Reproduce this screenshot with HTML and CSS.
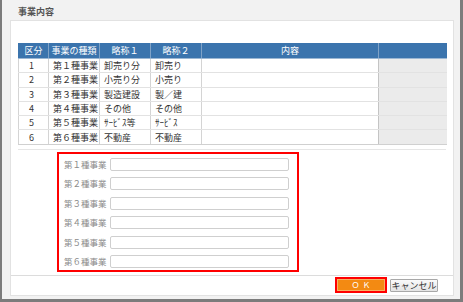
FILE: index.html
```html
<!DOCTYPE html>
<html lang="ja">
<head>
<meta charset="utf-8">
<link rel="stylesheet" href="styles.css">
</head>
<body>
<div class="window">
  <div class="title">事業内容</div>
  <div class="panel">
    <table class="grid">
      <colgroup>
        <col class="c1"><col class="c2"><col class="c3"><col class="c4"><col class="c5"><col class="c6">
      </colgroup>
      <thead>
        <tr><th>区分</th><th>事業の種類</th><th>略称１</th><th>略称２</th><th>内容</th><th></th></tr>
      </thead>
      <tbody>
        <tr><td class="num">1</td><td>第１種事業</td><td>卸売り分</td><td>卸売り</td><td></td><td class="gray"></td></tr>
        <tr><td class="num">2</td><td>第２種事業</td><td>小売り分</td><td>小売り</td><td></td><td class="gray"></td></tr>
        <tr><td class="num">3</td><td>第３種事業</td><td>製造建設</td><td>製／建</td><td></td><td class="gray"></td></tr>
        <tr><td class="num">4</td><td>第４種事業</td><td>その他</td><td>その他</td><td></td><td class="gray"></td></tr>
        <tr><td class="num">5</td><td>第５種事業</td><td>ｻｰﾋﾞｽ等</td><td>ｻｰﾋﾞｽ</td><td></td><td class="gray"></td></tr>
        <tr><td class="num">6</td><td>第６種事業</td><td>不動産</td><td>不動産</td><td></td><td class="gray"></td></tr>
      </tbody>
    </table>
    <div class="sep"></div>
    <div class="form">
      <label>第１種事業</label><div class="input"></div>
      <label>第２種事業</label><div class="input"></div>
      <label>第３種事業</label><div class="input"></div>
      <label>第４種事業</label><div class="input"></div>
      <label>第５種事業</label><div class="input"></div>
      <label>第６種事業</label><div class="input"></div>
    </div>
    <div class="footer">
      <button class="ok">ＯＫ</button>
      <button class="cancel">キャンセル</button>
    </div>
  </div>
</div>
</body>
</html>
```
FILE: styles.css
```css
html, body {
  margin: 0;
  padding: 0;
}
body {
  width: 463px;
  height: 302px;
  overflow: hidden;
  font-family: "Noto Sans CJK JP", "Noto Sans", sans-serif;
  font-size: 9px;
  color: #333;
}
.window {
  box-sizing: border-box;
  width: 463px;
  height: 302px;
  background: #f2f2f2;
  border-left: 2px solid #7c7c7c;
  border-right: 3px solid #7c7c7c;
  border-bottom: 3px solid #7c7c7c;
  display: flex;
  flex-direction: column;
}
.title {
  height: 20px;
  box-sizing: border-box;
  padding: 7px 0 0 16px;
  line-height: 10px;
  font-weight: bold;
  color: #555;
}
.panel {
  box-sizing: border-box;
  margin-left: 8px;
  width: 444px;
  height: 276px;
  background: #fff;
  border: 1px solid #e2e2e2;
  display: flex;
  flex-direction: column;
}
.grid {
  margin: 22px 0 0 7px;
  width: 428px;
  border-collapse: collapse;
  table-layout: fixed;
}
.c1 { width: 30px; }
.c2 { width: 51px; }
.c3 { width: 51px; }
.c4 { width: 51px; }
.c5 { width: 177px; }
.c6 { width: 68px; }
.grid th {
  background: #3b74ad;
  color: #fff;
  font-weight: normal;
  height: 15px;
  padding: 0;
  line-height: 14px;
  border-left: 1px solid #7fa2c7;
  border-bottom: 1px solid #9cb7d3;
  text-align: center;
}
.grid th:first-child { border-left: 1px solid #3b74ad; }
.grid td {
  height: 13.3px;
  padding: 0 0 0 4px;
  line-height: 13px;
  border-left: 1px solid #d4d4d4;
  border-bottom: 1px solid #e2e2e2;
  white-space: nowrap;
}
.grid td.num {
  text-align: center;
  padding: 0 4px 0 0;
}
.grid td.gray {
  background: #ebebeb;
  border-left: 1px solid #c4c4c4;
}
.grid tbody tr:last-child td { border-bottom: 1px solid #d0d0d0; }
.sep {
  margin: 4px 0 0 7px;
  width: 428px;
  height: 1px;
  background: #e6e6e6;
}
.form {
  box-sizing: border-box;
  margin: 2px 0 0 46px;
  width: 242px;
  height: 120px;
  border: 2px solid #f00;
  padding: 4px 8px 0 5px;
  display: grid;
  grid-template-columns: 46px 1fr;
  grid-auto-rows: 13px;
  row-gap: 6.5px;
  align-items: center;
}
.form label {
  color: #8a8a8a;
  font-size: 8.5px;
  line-height: 13px;
  white-space: nowrap;
}
.input {
  box-sizing: border-box;
  height: 13px;
  border: 1px solid #cfcfcf;
  border-radius: 2px;
  background: #fff;
}
.footer {
  margin-top: auto;
  box-sizing: border-box;
  height: 20px;
  border-top: 1px solid #dcdcdc;
  display: flex;
  justify-content: flex-end;
  align-items: center;
  gap: 3px;
  padding: 0 15px 1px 0;
}
.footer button {
  font-family: inherit;
  font-size: 9px;
  padding: 0;
  margin: 0;
  box-sizing: border-box;
}
.ok {
  width: 52px;
  height: 16px;
  border: 2px solid #f00;
  background: #f38a12;
  box-shadow: inset 0 0 0 1px #f7b062;
  color: #fff;
  font-size: 8px !important;
  letter-spacing: 3px;
  text-indent: 3px;
  line-height: 12px;
}
.cancel {
  width: 48px;
  height: 13px;
  border: 1px solid #a8a8a8;
  border-radius: 1px;
  background: linear-gradient(#fafafa, #e4e4e4);
  color: #333;
  line-height: 11px;
}
```
